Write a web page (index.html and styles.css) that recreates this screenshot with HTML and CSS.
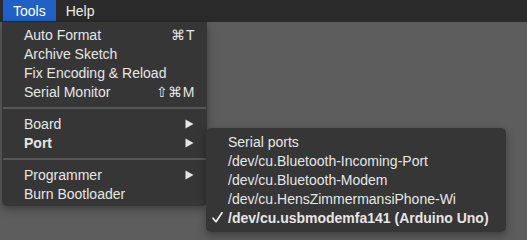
FILE: index.html
```html
<!DOCTYPE html>
<html>
<head>
<meta charset="utf-8">
<link rel="stylesheet" href="styles.css">
</head>
<body>
<div class="menubar">
  <div class="mb-item active">Tools</div>
  <div class="mb-item">Help</div>
</div>
<div class="menu main">
  <div class="row"><span>Auto Format</span><span class="key">⌘T</span></div>
  <div class="row"><span>Archive Sketch</span></div>
  <div class="row"><span>Fix Encoding &amp; Reload</span></div>
  <div class="row"><span>Serial Monitor</span><span class="key">⇧⌘M</span></div>
  <div class="sep"></div>
  <div class="row"><span>Board</span><svg class="arrow" width="9" height="10" viewBox="0 0 9 10"><path d="M0.5 0.5 L8.5 5 L0.5 9.5 Z" fill="#e6e6e6"/></svg></div>
  <div class="row bold"><span>Port</span><svg class="arrow" width="9" height="10" viewBox="0 0 9 10"><path d="M0.5 0.5 L8.5 5 L0.5 9.5 Z" fill="#e6e6e6"/></svg></div>
  <div class="sep"></div>
  <div class="row"><span>Programmer</span><svg class="arrow" width="9" height="10" viewBox="0 0 9 10"><path d="M0.5 0.5 L8.5 5 L0.5 9.5 Z" fill="#e6e6e6"/></svg></div>
  <div class="row"><span>Burn Bootloader</span></div>
</div>
<div class="menu sub">
  <div class="row"><span>Serial ports</span></div>
  <div class="row"><span>/dev/cu.Bluetooth-Incoming-Port</span></div>
  <div class="row"><span>/dev/cu.Bluetooth-Modem</span></div>
  <div class="row"><span>/dev/cu.HensZimmermansiPhone-Wi</span></div>
  <div class="row bold checked"><svg class="check" width="11" height="11" viewBox="0 0 11 11"><path d="M1 6.2 L4 9.8 L10 0.8" fill="none" stroke="#ececec" stroke-width="1.7" stroke-linecap="round" stroke-linejoin="round"/></svg><span>/dev/cu.usbmodemfa141 (Arduino Uno)</span></div>
</div>
</body>
</html>
```

FILE: styles.css
```css
html, body {
  margin: 0;
  padding: 0;
}
body {
  width: 527px;
  height: 240px;
  background: #5d5d5d;
  font-family: "Liberation Sans", Arial, sans-serif;
  font-size: 14px;
  color: #e6e6e6;
  position: relative;
  overflow: hidden;
}
.menubar {
  display: flex;
  height: 22px;
  background: #2b2b2b;
  padding-left: 3px;
}
.mb-item {
  display: flex;
  align-items: center;
  padding: 0 10px;
  height: 21px;
  font-size: 14px;
  color: #ececec;
}
.mb-item.active {
  background: #2160c5;
  color: #ffffff;
}
.menu {
  position: absolute;
  background: #363636;
  box-shadow: 0 3px 8px rgba(0,0,0,0.35);
}
.menu.main {
  left: 2px;
  top: 22px;
  width: 205px;
  padding: 3px 0 3px 0;
  border-radius: 0 0 5px 5px;
}
.menu.sub {
  left: 206px;
  top: 128px;
  width: 300px;
  padding: 4px 0 5px 0;
  border-radius: 5px;
}
.row {
  position: relative;
  display: flex;
  align-items: center;
  justify-content: space-between;
  height: 19px;
  padding: 0 12px 0 22px;
  white-space: nowrap;
}
.row.bold {
  font-weight: bold;
}
.key {
  letter-spacing: 0.5px;
}
.arrow {
  display: block;
  margin-right: 1px;
}
.sep {
  height: 2px;
  margin: 6px 1px 5px 1px;
  background: #575757;
}
.check {
  position: absolute;
  left: 6px;
  top: 4px;
}
```
